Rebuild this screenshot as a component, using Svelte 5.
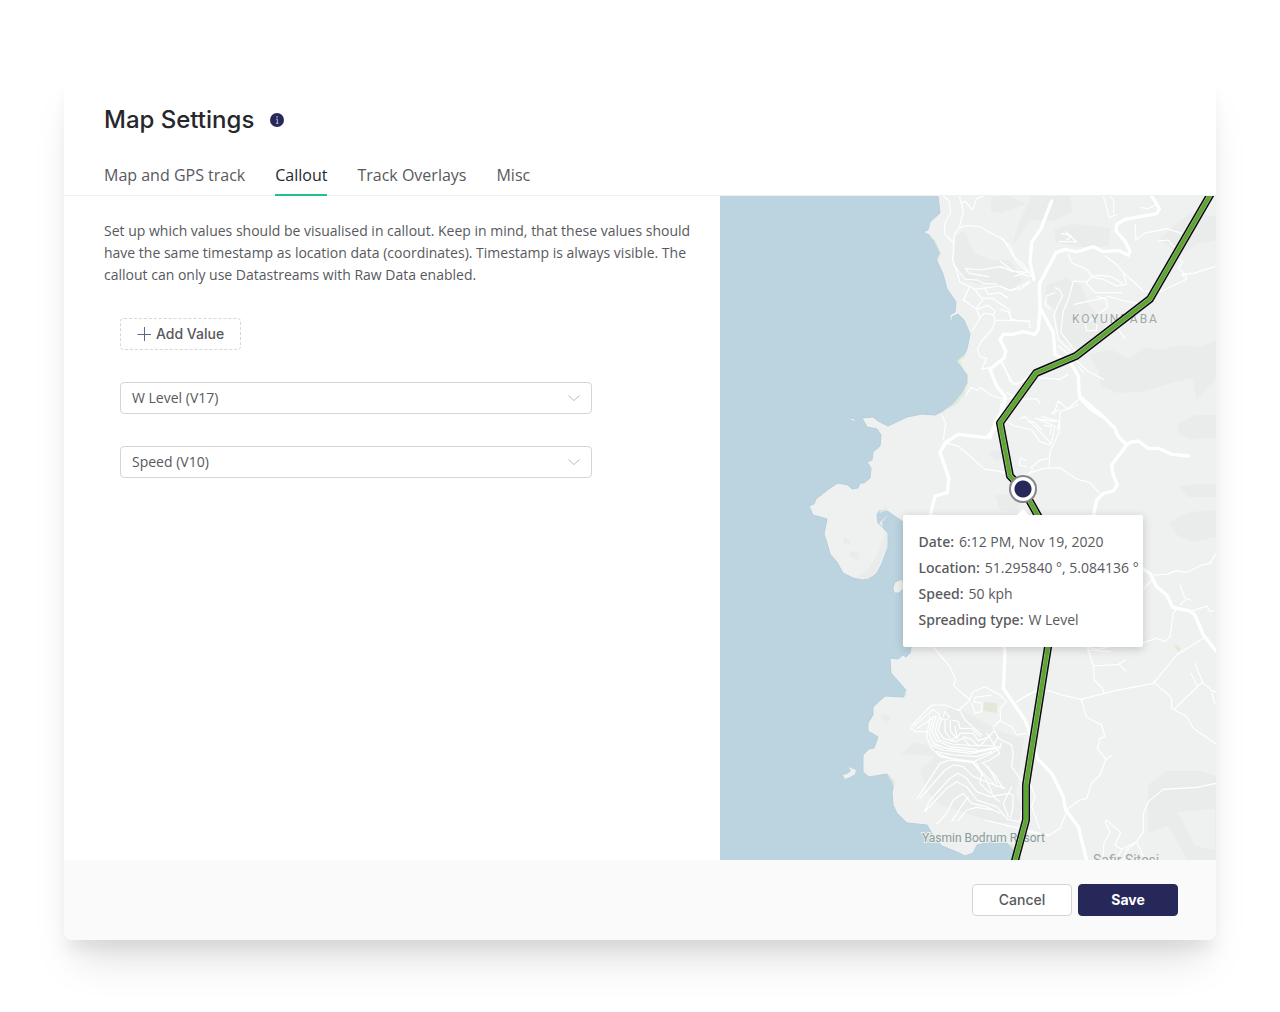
<script>
  const tabs = ['Map and GPS track', 'Callout', 'Track Overlays', 'Misc'];
  let active = $state('Callout');

  const options = ['W Level (V17)', 'Speed (V10)'];
  let values = $state(['W Level (V17)', 'Speed (V10)']);

  const details = [
    ['Date:', '6:12 PM, Nov 19, 2020'],
    ['Location:', '51.295840 °, 5.084136 °'],
    ['Speed:', '50 kph'],
    ['Spreading type:', 'W Level'],
  ];

  const track = '1213,190 1150,299 1076,356 1036,373 1000,423 1010,476 1023,489 1046,530 1054,600 1048,647 1026,785 1026,820 1013,868';
</script>

<main class="dialog">
  <header>
    <div class="heading">
      <h1>Map Settings</h1>
      <button class="info" aria-label="About map settings">
        <svg viewBox="0 0 14 14" aria-hidden="true">
          <circle cx="7" cy="7" r="7" fill="#26285a" />
          <path d="M6.2 6H7.3V10.2M5.9 10.3H8.5" fill="none" stroke="#b9bad0" />
          <circle cx="7.1" cy="3.9" r=".8" fill="#b9bad0" />
        </svg>
      </button>
    </div>
    <nav aria-label="Settings sections">
      {#each tabs as tab}
        <button class="tab" class:active={active === tab} onclick={() => (active = tab)}>{tab}</button>
      {/each}
    </nav>
  </header>

  <div class="content">
    <section class="settings">
      <p>
        Set up which values should be visualised in callout. Keep in mind, that these values should
        have the same timestamp as location data (coordinates). Timestamp is always visible. The
        callout can only use Datastreams with Raw Data enabled.
      </p>
      <div class="fields">
        <button class="add" onclick={() => values.push(options[0])}>
          <svg viewBox="0 0 14 14" aria-hidden="true"><path d="M7.5 0V14M.5 7.5H14" fill="none" stroke="#62648a" /></svg>
          Add Value
        </button>
        {#each values as _, i}
          <div class="select">
            <select bind:value={values[i]} aria-label={`Value ${i + 1}`}>
              {#each options as option}
                <option>{option}</option>
              {/each}
            </select>
            <svg viewBox="0 0 12 8" aria-hidden="true"><path d="M.5 1.5L6 6.5L11.5 1.5" fill="none" stroke="#bcbdc0" /></svg>
          </div>
        {/each}
      </div>
    </section>

    <section class="map" aria-label="Map preview">
      <svg class="canvas" viewBox="720 196 496 664" preserveAspectRatio="xMidYMid slice" aria-hidden="true">
        <rect x="720" y="196" width="496" height="664" fill="#bcd4e0" />

        <!-- land -->
        <g fill="#eef1f0" stroke="#b7cfdb" stroke-width="1">
          <path d="M938 190V196L940 213L930 222L928 230L923 232L929 235L934 241L940 253L937 261L943 274L947 289L956 302L955 312L950 315V321H952V317L958 314L964 320L970 334L967 349L965 354L957 361L967 375V383L962 393L953 404L943 411L935 415L922 414L907 417L888 426L878 421L873 417L862 418L867 427L877 429L881 435L880 446L873 452L872 460L867 462L871 468L870 478L864 483H860L858 488L852 489L848 485L838 483L830 488L816 499L814 504L809 506L813 515L827 519L824 534L827 543L830 554L837 562L843 573L853 578L863 580L872 577L877 573L882 563L888 547V533L878 523L877 515L879 511L886 510L903 522L925 560L911 620V647L910 653L906 657L903 655L898 659L890 658L891 673L906 690L904 697L885 696L873 707V715L868 723V731L878 737L874 748L869 749L863 755V772L869 777L887 774L894 782L892 793L893 805L897 813L907 823L927 825L933 835L942 846L957 852L965 856L973 853L977 845L990 842L1007 843L1014 850L1022 862V868H1224V190Z" />
          <path d="M893 588L895 582L902 579L905 587L899 593H894Z" />
        </g>
        <path d="M843 775L847 774L851 771L849 767L853 769L856 770L855 774L850 777L845 779ZM847 418L850 419H853L856 421L852 420Z" fill="#eef1f0" />

        <!-- beaches and greens -->
        <g fill="#e1ead9">
          <path d="M929 235L935 240L941 253L938 261L937 259L940 253L934 241ZM967 349L965 357L960 361L966 373L957 361L965 354ZM967 383L965 394L956 405L943 411L953 404L962 393ZM887 774L895 782L894 788L892 782ZM906 690L907 695L904 697ZM879 511L886 509L888 511L884 511L880 513ZM1007 843L1014 845L1022 858V862L1014 850Z" />
          <path d="M984 702L997 703V713L983 711ZM1174 646L1178 645L1181 649L1178 652Z" />
        </g>

        <!-- hill shading -->
        <g fill="#e9ecea">
          <path d="M991 197L1010 196L1026 204L1000 213L991 211ZM956 236L964 231L974 253L992 260L1010 260L1022 280L1012 290L984 285L962 280L954 262Z" />
          <path d="M1032 196H1070L1073 212L1053 221L1030 220L1012 247L1018 224ZM1054 230L1070 224L1110 228L1109 246L1084 247L1056 243Z" />
          <path d="M1047 285L1066 278L1082 286L1088 304L1105 325L1093 346L1074 349L1060 338L1055 310L1045 300ZM1176 224L1192 212L1216 217V240L1197 244L1180 255L1160 239Z" />
          <path d="M1088 354L1112 350L1130 359L1145 347L1158 350L1182 345L1200 347L1216 340V378L1196 400L1193 378L1176 382L1140 392L1117 393L1101 386L1098 370Z" />
          <path d="M1178 424L1195 415H1216V438L1190 439L1179 434ZM1179 487L1195 484H1216V497H1188ZM1169 522L1190 512L1216 510V537L1193 542L1177 535ZM988 452L1006 450L1014 459L995 460ZM995 495L1020 493L1018 512L1000 510Z" />
          <path d="M1148 785L1166 771H1200L1216 776V860H1188L1168 826L1148 832ZM940 715L953 706L980 720L1001 732L1024 738L1016 795L1028 820L1000 824L940 805L930 795L920 770L936 756L901 754L914 742L938 748Z" />
          <path d="M882 713L891 717L888 723L881 718ZM844 537L850 540V545L843 543ZM850 551L860 553L858 560L850 556Z" />
          <path d="M888 515L882 522L884 535L878 553L868 570L858 577L868 579L876 572L887 547V533L879 523Z" />
        </g>
        <path d="M1178 812L1215 809V850L1195 846Z" fill="#eef1f0" />

        <!-- minor roads -->
        <g fill="none" stroke="#fff" stroke-width="3.5" stroke-linejoin="round" stroke-linecap="round">
          <g transform="translate(780 196) scale(.33333)">
            <path d="M490 0L508 15L512 50L495 80L493 112L518 138M538 0L550 45L538 95L523 115L518 190L540 258L585 280L655 270L690 283L725 278L750 258M545 20L555 15L578 42L590 8L610 0M540 95L560 88L600 92L630 110L670 130L700 180L730 205L748 230M520 205L555 250L592 252L610 262L650 265M625 242L568 232L556 217L600 222L662 212L700 227L740 228L705 241M568 275L550 312L590 340L600 365L578 403M585 280L602 305L640 308L688 342L694 375M615 278L625 295L660 290L683 305M590 340L625 328L647 347L638 357M610 310L590 335M600 365L612 352L640 355L645 372L750 375M645 375L636 400L605 435L592 460L600 482L620 487L605 520L630 515M668 500L690 555L710 566L748 540M558 597L574 574L590 582L603 575L632 597L665 608" />
          </g>
          <g transform="translate(1000 196) scale(.33333)">
            <path d="M0 125L30 150L48 195L90 235L100 245M0 195L35 222L88 242M0 270L30 283L65 270L88 255M0 290L22 305M0 340L25 348L35 370L88 378L90 395M310 0L328 65L350 55M330 0L342 15L340 50M405 85L408 133L432 112L500 98L545 112M422 35L445 38L470 25M475 135L505 132L518 150L540 160M178 137L230 138L198 108M185 112L215 120L200 132M205 175L215 200L260 220L275 240L300 238L335 242L370 265M315 180L345 202L370 230L380 265L350 270L310 250L275 243M275 243L260 258L220 255L205 310L190 345L182 410L210 445L235 475M258 260L285 290L365 290M290 300L320 312L322 335L300 350L270 375M222 325L315 305M320 300L375 315L430 325M350 350L355 400L375 428M255 380L260 405L290 403L290 385M163 290L140 300L135 325L150 340M165 275L180 282L188 300L172 330L162 360L175 430L210 465M370 230L430 285L480 288L560 250L545 235L580 232L645 212M540 190L548 200L535 215L560 240M175 450L225 490L262 525L310 550M235 510L250 530M110 545L180 550L205 535M0 495L30 545L40 565L105 545M20 590L60 610L110 608L120 622M235 625L205 640L175 615L160 655M50 600L0 615" />
          </g>
          <g transform="translate(1000 400) scale(.33333)">
            <path d="M235 0L205 25L180 35L178 95L150 155L147 200M155 40L175 30M0 55L45 78L95 90L120 125L150 135M62 55L75 50L125 100L155 132M85 65L100 65L125 90M120 60L165 78L155 125M105 55L165 65M130 75L155 80L150 105M125 50L178 65L172 90M80 200L58 195L62 175L78 180M90 205L120 180L145 175M65 228L130 205L180 203L230 237L270 248L298 278M100 205L75 232M0 218L25 222M430 570L455 540M460 525L500 523L530 512L560 518L600 497L630 490L648 460M540 555L555 595L572 600M555 600L540 615M520 640L530 625M578 632L622 618L630 635L642 632M520 640L510 710L495 725L470 715L430 728M262 742L290 748L330 740" />
          </g>
          <g transform="translate(780 400) scale(.33333)">
            <path d="M485 45L497 68L490 120M500 130L535 138L615 208L690 218" />
          </g>
          <g transform="translate(830 620) scale(.33333)">
            <path d="M308 80L360 140L377 180L370 197L420 240L385 272M420 235L430 215L465 200L510 225L530 245L510 265L512 300L490 320M560 245L600 220L640 210M515 305L545 320L560 345L590 340M485 225L435 232L432 245L455 250L455 275L435 280L425 250M242 325L258 335L290 335M242 320L305 255L345 255L390 272L405 300L455 345M250 320L310 268L325 280L335 300M262 325L315 290M340 290L345 275L358 290L350 300L330 295M300 290L290 350L300 375L340 390L420 400L500 385M310 290L297 340L310 370L350 385L430 395L510 380M318 290L305 335L318 360L360 380L440 388M325 295L315 335L330 360L365 372L450 378L490 335M333 300L325 330L340 355L375 365L400 355L420 378M345 300L345 335L365 360L380 350L375 320M360 302L362 335L380 355L390 340L430 340L445 362L480 350M365 300L385 305L390 325L425 325L450 350M400 350L425 358L440 375L490 378L505 350M300 380L320 400L360 415L430 425L475 405L510 385L513 370M320 395L370 405L440 410L485 395M305 385L330 410L435 428M262 535L330 430L360 420L430 428L460 460L500 500M270 535L345 450L370 435L400 440L430 470L480 490L525 505M285 572L300 540L360 475L385 460L410 475L440 515L480 530L540 520M285 575L350 505L380 485L410 500L440 540L500 560L535 600M320 612L350 580L370 540L400 520L425 550L470 560L510 580M365 605L400 550L415 530M385 602L410 570L440 562L490 570M440 430L455 460L450 490L480 520M460 430L490 460L520 505M475 440L500 490M430 430L470 480L490 530L510 545M490 325L505 355L545 375L550 400L545 440L580 490M470 340L510 400L480 420L455 430M535 520L550 525L548 565L540 600L570 605L575 570M545 500L520 550L535 590M570 490L580 500M600 490L615 530L605 560L628 625M465 600L620 638L660 645" />
          </g>
          <g transform="translate(1000 630) scale(.33333)">
            <path d="M262 50L268 70L280 108L355 103L375 90M355 103L378 123M280 108L283 150L308 175L312 190M140 180L185 195L243 208L345 182L460 160L530 75L610 25M50 215L115 178M460 155L500 190L515 205V235L560 260L580 295L648 342M525 235L600 162L608 157L585 100M590 165L573 130M608 157L640 185H648M635 190L645 220M243 208L260 262L305 285L315 320L300 325L292 355L318 388L335 377M318 388L300 435L275 460L260 505L240 510L205 535L180 595L145 618L60 600M648 460L590 472L490 478L445 515L430 550V605L410 635L430 680M410 635L365 658L345 645L362 608L320 570L315 575L330 605L312 640L308 690M365 658L350 690M410 635L380 660L370 690M262 60L330 65" />
          </g>
        </g>

        <!-- main roads -->
        <g fill="none" stroke="#fff" stroke-width="10" stroke-linejoin="round" stroke-linecap="round">
          <g transform="translate(1000 196) scale(.33333)">
            <path d="M155 15L122 100L95 138L90 200L102 250M452 -5L478 38L470 53L375 70L350 85L348 105L375 135L390 165L385 178L355 163L310 167L280 152L230 168L195 160L168 170L118 265L120 335L160 410L165 475L215 505L235 540L238 600L310 662M120 335L115 400L105 415L70 407L40 415H10L0 430L17 465L13 485L-30 520M-30 520L-10 570L15 602L10 640L-15 680L-30 725" />
          </g>
          <g transform="translate(1000 400) scale(.33333)">
            <path d="M242 -4L270 25L315 55L345 85L355 110L380 135L390 127L415 123L445 145H475L515 163L565 168M380 135L335 195L338 220L352 255L340 273L310 280L290 300L280 350M425 505L450 520L470 560L500 585L518 622L570 633L585 645L610 705L650 755" />
          </g>
          <g transform="translate(780 400) scale(.33333)">
            <path d="M665 15L660 70L620 113L535 103L497 127L480 158L507 235L502 278L465 288L450 350" />
          </g>
          <g transform="translate(1000 630) scale(.33333)">
            <path d="M10 20L15 70L10 175L75 270L100 340L112 385L155 430L190 500L197 540L235 590L262 700" />
          </g>
        </g>

        <g font-family="Roboto, 'Liberation Sans', sans-serif" fill="#9fa8a7" stroke="#eef1f0" stroke-width="2" paint-order="stroke">
          <text class="district" x="1072" y="323">KOYUNBABA</text>
          <text class="place" x="922" y="842" fill="#899b9a">Yasmin Bodrum Resort</text>
          <text class="town" x="1093" y="865">Safir Sitesi</text>
        </g>

        <g fill="none" stroke-linejoin="round">
          <polyline points={track} stroke="#0c0c0c" stroke-width="8" />
          <polyline points={track} stroke="#b6c3ae" stroke-width="5" />
          <polyline points={track} stroke="#5ca631" stroke-width="4" />
        </g>
      </svg>

      <div class="pin">
        <div class="callout">
          <dl>
            {#each details as [name, value]}
              <div class="row"><dt>{name}</dt><dd>{value}</dd></div>
            {/each}
          </dl>
        </div>
      </div>
    </section>
  </div>

  <footer>
    <button class="cancel">Cancel</button>
    <button class="save">Save</button>
  </footer>
</main>

<style>
  :global(body) {
    background: #fff;
  }
  .dialog,
  .dialog :global(*) {
    box-sizing: border-box;
  }
  .dialog {
    display: flex;
    flex-direction: column;
    min-height: calc(100vh - 144px);
    margin: 72px 64px;
    overflow: clip;
    background: #fff;
    border-radius: 8px;
    box-shadow: 0 30px 40px -12px rgba(0, 0, 0, 0.13), 0 14px 16px -4px rgba(0, 0, 0, 0.06);
    color: #58595d;
    font: 14px/22px 'Open Sans', 'Noto Sans', sans-serif;
  }
  button,
  select {
    font: inherit;
    color: inherit;
    cursor: pointer;
  }
  header {
    padding: 32px 40px 0;
    border-bottom: 1px solid #f0f0f1;
  }
  .heading {
    display: flex;
    align-items: center;
    gap: 16px;
    height: 32px;
  }
  h1 {
    margin: 0;
    color: #26272b;
    font: 500 24px/32px Inter, sans-serif;
  }
  .info {
    display: flex;
    padding: 0;
    border: 0;
    background: none;
  }
  .info svg {
    width: 14px;
    height: 14px;
  }
  nav {
    display: flex;
    gap: 30px;
    margin: 19px 0 -1px;
  }
  .tab {
    height: 41px;
    padding: 0;
    border: 0;
    border-bottom: 2px solid transparent;
    background: none;
    font-size: 16px;
    line-height: 24px;
  }
  .tab.active {
    border-color: #23c08f;
    color: #26272b;
  }
  .content {
    flex: 1;
    display: grid;
    grid-template-columns: 41fr 31fr;
  }
  .settings {
    padding: 24px 24px 24px 40px;
  }
  p {
    margin: 0;
  }
  .fields {
    display: flex;
    flex-direction: column;
    align-items: flex-start;
    gap: 32px;
    margin-top: 32px;
    padding: 0 104px 0 16px;
  }
  .add {
    display: flex;
    align-items: center;
    gap: 5px;
    height: 32px;
    padding: 0 16px;
    border: 1px dashed #d6d7d9;
    border-radius: 4px;
    background: #fff;
    font: 500 14px/22px Inter, sans-serif;
  }
  .add svg {
    width: 14px;
    height: 14px;
  }
  .select {
    position: relative;
    width: 100%;
  }
  select {
    display: block;
    width: 100%;
    height: 32px;
    padding: 0 32px 0 11px;
    border: 1px solid #d4d5d7;
    border-radius: 4px;
    background: #fff;
    appearance: none;
  }
  .select svg {
    position: absolute;
    top: 12px;
    right: 12px;
    width: 12px;
    height: 8px;
    pointer-events: none;
  }
  .map {
    position: relative;
    overflow: hidden;
  }
  .canvas {
    position: absolute;
    width: 100%;
    height: 100%;
  }
  .district {
    font-size: 12px;
    letter-spacing: 2px;
  }
  .place {
    font-size: 12px;
  }
  .town {
    font-size: 14px;
  }
  .pin {
    position: absolute;
    left: 61%;
    top: 44%;
    width: 28px;
    height: 28px;
    margin: -13px 0 0 -14px;
    border: 2px solid #85868a;
    border-radius: 50%;
    background: radial-gradient(circle, #26285a 8px, #fff 9px);
  }
  .callout {
    position: absolute;
    top: 38px;
    left: -108px;
    width: 240px;
    padding: 14px 0 14px 16px;
    border-radius: 2px;
    background: #fff;
    box-shadow: 0 2px 10px rgba(0, 0, 0, 0.18);
    white-space: nowrap;
  }
  .callout::before {
    content: '';
    position: absolute;
    top: -6px;
    left: 113px;
    border: 7px solid transparent;
    border-top: 0;
    border-bottom-color: #fff;
  }
  dl {
    margin: 0;
  }
  .row {
    display: flex;
    gap: 5px;
    line-height: 26px;
  }
  dt {
    font-family: 'Noto Sans', sans-serif;
    font-weight: 500;
  }
  dd {
    margin: 0;
  }
  footer {
    display: flex;
    justify-content: flex-end;
    gap: 6px;
    padding: 24px 38px;
    background: #fafafa;
  }
  footer button {
    width: 100px;
    height: 32px;
    border: 1px solid #d4d5d7;
    border-radius: 4px;
    background: #fff;
    font: 500 14px/22px Inter, sans-serif;
  }
  footer .save {
    border-color: #26285a;
    background: #26285a;
    color: #fff;
    font-weight: 700;
  }
</style>
